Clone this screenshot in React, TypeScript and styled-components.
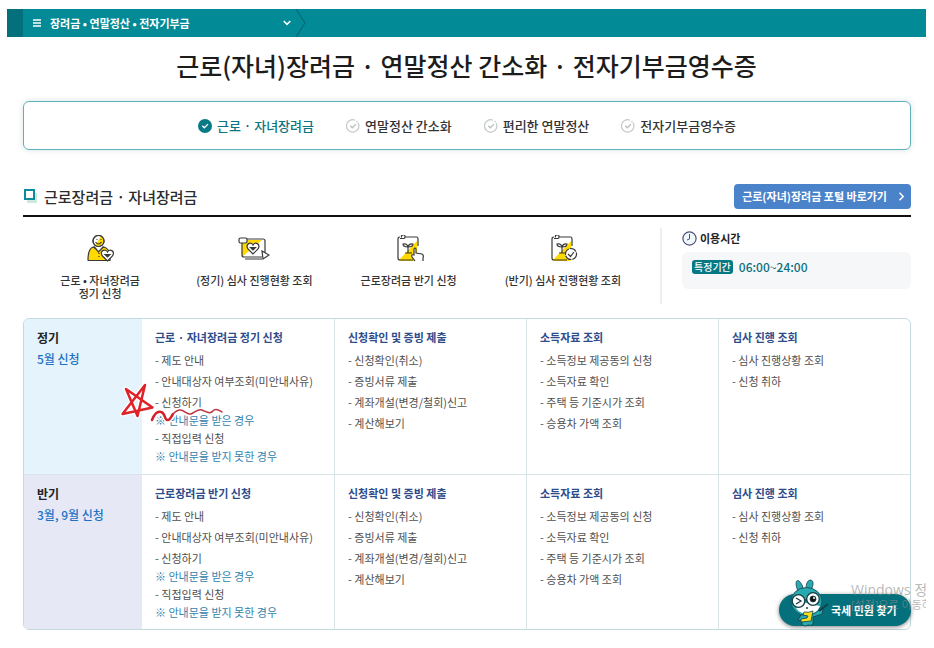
import React from "react";
import styled, { createGlobalStyle, css } from "styled-components";

const GlobalStyle = createGlobalStyle`
  *, *::before, *::after { box-sizing: border-box; }
  body {
    margin: 0;
    background: #fff;
    color: #222;
    font-family: "Noto Sans CJK KR", sans-serif;
    font-size: 11px;
  }
  h1, h2, h3, ul, p { margin: 0; padding: 0; }
  ul { list-style: none; }
  a { color: inherit; text-decoration: none; }
  button { font-family: inherit; border: 0; padding: 0; background: none; cursor: pointer; }
`;

const Page = styled.div`
  position: relative;
  margin: 9px 8px 0 7px;
`;

const TopBar = styled.nav`
  display: flex;
  height: 28px;
  background: #028a96;
  border-left: 16px solid #04707b;
`;

const MenuButton = styled.button`
  display: flex;
  align-items: center;
  gap: 9px;
  width: 272px;
  padding: 0 4px 0 10px;
  color: #fff;
  font-size: 11px;
  font-weight: 700;
  text-align: left;

  span { flex: 1; white-space: nowrap; }
`;

const Title = styled.h1`
  padding-top: 9px;
  font-size: 25px;
  line-height: 38px;
  font-weight: 500;
  text-align: center;
  color: #1c1c1c;
`;

const Content = styled.main`
  padding: 0 15px 0 16px;
`;

const Tabs = styled.nav`
  display: flex;
  justify-content: center;
  align-items: center;
  gap: 32px;
  height: 49px;
  margin-top: 17px;
  border: 1px solid #5fb1bb;
  border-radius: 6px;
  box-shadow: 0 0 6px rgba(0, 80, 90, 0.16);
`;

const Tab = styled.button<{ $active?: boolean }>`
  display: flex;
  align-items: center;
  gap: 5px;
  font-size: 13px;
  font-weight: 500;
  white-space: nowrap;
  color: ${(p) => (p.$active ? "#0b7583" : "#333")};
`;

const SectionHead = styled.header`
  display: flex;
  align-items: center;
  justify-content: space-between;
  height: 67px;
  padding-top: 27px;
  border-bottom: 2px solid #111;

  h2 {
    display: flex;
    align-items: center;
    gap: 6px;
    font-size: 15px;
    font-weight: 500;
    color: #2b2b2b;
  }
`;

const PortalLink = styled.a`
  display: flex;
  align-items: center;
  gap: 11px;
  height: 25px;
  padding: 0 6px 0 8px;
  border-radius: 4px;
  background: #4b83cb;
  color: #fff;
  font-size: 11px;
  font-weight: 700;
`;

const Services = styled.div`
  display: flex;
  padding-top: 11px;
`;

const ServiceList = styled.ul`
  flex: 1;
  display: grid;
  grid-template-columns: repeat(4, 1fr);
  height: 76px;
  padding: 7px 20px 0 0;
  border-right: 2px solid #eee;
`;

const ServiceLink = styled.a`
  display: flex;
  flex-direction: column;
  align-items: center;
  gap: 9px;
  font-size: 11px;
  line-height: 13px;
  font-weight: 500;
  text-align: center;
  color: #333;
  white-space: pre-line;
`;

const Hours = styled.section`
  width: 249px;
  padding-left: 20px;

  h3 {
    display: flex;
    align-items: center;
    gap: 3px;
    height: 20px;
    font-size: 11px;
    font-weight: 700;
  }
`;

const HoursBox = styled.div`
  display: flex;
  gap: 6px;
  height: 37px;
  margin-top: 4px;
  padding: 8px 10px;
  border-radius: 6px;
  background: #f5f7f9;
  color: #0b6f7d;
  font-size: 12px;
  line-height: 14px;
  font-weight: 500;
`;

const Badge = styled.span`
  height: 14px;
  padding: 0 2px;
  border-radius: 3px;
  background: #077985;
  color: #fff;
  font-size: 10px;
  line-height: 14px;
  font-weight: 500;
`;

const TableFrame = styled.div`
  margin-top: 14px;
  border: 1px solid #c3dadf;
  border-radius: 6px;
`;

const Table = styled.table`
  width: 100%;
  table-layout: fixed;
  border-collapse: separate;
  border-spacing: 0;

  th, td { height: 155px; padding: 8px 0 0 13px; vertical-align: top; text-align: left; }
  td { border-left: 1px solid #d9e5e8; }
  td:nth-child(2) { border-left: 0; }
  tr + tr > * { border-top: 1px solid #d9e5e8; }
  tr:first-child > th { border-top-left-radius: 5px; }
  tr:last-child > th { border-bottom-left-radius: 5px; }
`;

const Period = styled.th<{ $tint: string }>`
  width: 118px;
  background: ${(p) => p.$tint};
  font-size: 12px;
  line-height: 21px;
  font-weight: 700;

  span { display: block; font-weight: 500; color: #1c72c4; }
`;

const GroupTitle = styled.h3`
  font-size: 11px;
  line-height: 20px;
  font-weight: 700;
  color: #2d4c8c;
`;

const Links = styled.ul`
  display: grid;
  gap: 3px;
  padding-top: 4px;
  line-height: 18px;
  color: #505050;
  white-space: nowrap;

  li { position: relative; }
  a { display: block; width: max-content; }
`;

const NoteLink = styled.a`
  color: #3382ad;
`;

const Scribble = styled.svg`
  position: absolute;
  left: -36px;
  top: -11px;
  pointer-events: none;
`;

const overlay = css`
  position: absolute;
  right: 0;
`;

const FindButton = styled.button`
  ${overlay}
  right: 15px;
  bottom: 4px;
  width: 132px;
  height: 32px;
  padding-left: 52px;
  border-radius: 16px;
  background: #04707c;
  box-shadow: 0 1px 4px rgba(0, 0, 0, 0.5);
  color: #fff;
  font-size: 11px;
  font-weight: 700;
  text-align: left;
  white-space: nowrap;

  svg { position: absolute; left: 10px; bottom: -1px; }
`;

const Watermark = styled.p`
  ${overlay}
  bottom: 18px;
  width: 75px;
  overflow: hidden;
  white-space: nowrap;
  color: rgba(140, 140, 140, 0.62);
  font-family: "Open Sans", "Noto Sans CJK KR", sans-serif;
  font-size: 11px;
  line-height: 14px;
  pointer-events: none;

  strong { display: block; font-size: 14px; line-height: 17px; font-weight: 400; }
`;

const MenuIcon = () => (
  <svg width="8" height="8" viewBox="0 0 8 8" stroke="#fff" strokeWidth="1.4" aria-hidden="true">
    <path d="M0 1h8M0 4h8M0 7h8" />
  </svg>
);

const DownIcon = () => (
  <svg width="8" height="6" viewBox="0 0 8 6" fill="none" stroke="#fff" strokeWidth="1.6" aria-hidden="true">
    <path d="M.7 1 4 4.3 7.3 1" />
  </svg>
);

const BarArrow = () => (
  <svg width="11" height="28" viewBox="0 0 11 28" fill="none" stroke="#04606c" aria-hidden="true">
    <path d="M1 0 10 14 1 28" />
  </svg>
);

const RightIcon = () => (
  <svg width="7" height="9" viewBox="0 0 7 9" fill="none" stroke="#fff" strokeWidth="1.5" aria-hidden="true">
    <path d="M1.5.8 5.2 4.5 1.5 8.2" />
  </svg>
);

const CheckIcon = ({ active }: { active?: boolean }) => (
  <svg width="14" height="14" viewBox="0 0 14 14" fill="none" aria-hidden="true">
    {active ? (
      <circle cx="7" cy="7" r="7" fill="#087986" />
    ) : (
      <path d="M12 3.8A6.2 6.2 0 1 1 9 1.2M10.5 2l1 1" stroke="#c4c8c7" strokeWidth="1.2" />
    )}
    <path d="m4.3 6.8 2 2 3.7-3.7" stroke={active ? "#fff" : "#b9bdbc"} strokeWidth="1.3" />
  </svg>
);

const SquareIcon = () => (
  <svg width="15" height="15" viewBox="0 0 15 15" aria-hidden="true">
    <path d="M4 4h10v10H4z" fill="#cfe8df" />
    <path d="M2 1h9v9H2z" fill="#fff" stroke="#078d9b" strokeWidth="2" />
  </svg>
);

const ClockIcon = () => (
  <svg width="15" height="15" viewBox="0 0 15 15" fill="none" stroke="#524e78" aria-hidden="true">
    <circle cx="7.5" cy="7.5" r="6.6" fill="#eff8fb" strokeWidth="1.2" />
    <path d="M7.5 3v5L5 9" />
  </svg>
);

const ink = "#393939";
const yellow = "#ffd900";

const PersonIcon = () => (
  <svg width="28" height="30" viewBox="-1 1 28 30" fill="none" stroke={ink} strokeWidth="1.2" aria-hidden="true">
    <path d="M1 26q0-11 5-13l5 3 6-3q5 2 6 7v6.500H2q-1 0-1-.5z" fill={yellow} />
    <path d="m7 12.500 4.500 5.500 5-5.500" fill="#fff" />
    <circle cx="11.500" cy="7" r="5.500" fill="#fff" />
    <path d="M14 2.100a5.500 5.500 0 0 1-5.500 9.500z" fill={yellow} stroke="none" />
    <circle cx="11.500" cy="7" r="5.500" />
    <path d="M8.500 8q3 4 6 0M9.500 5.500h1M13.500 5.500h1M12 19v1M12 22v1" />
    <path d="m20.500 27-5-5c-4-5 3-8 5-4 2-4 8-1 5 4z" fill="#fff" />
    <path d="M18 20.500h5L20.500 23z" fill={ink} />
  </svg>
);

const ScreenIcon = () => (
  <svg width="32" height="30" viewBox="0 0 32 30" fill="none" stroke={ink} strokeWidth="1.2" aria-hidden="true">
    <path d="M4 5h20L4 22z" fill={yellow} stroke="none" />
    <path d="M9 4h16q2 0 2 2v12M4 8v12q0 2 2 2h18M7 24h17" />
    <rect x="1" y="3" width="8" height="5" rx="1.500" fill="#fff" />
    <path d="m15 19-5-5c-3-5 3-8 5-4 2-4 8-1 5 4z" fill="#fff" />
    <path d="M12.500 12.500h5L15 15z" fill={ink} />
    <path d="m24 16 7 4-6 4z" fill="#fff" />
  </svg>
);

const DocumentIcon = ({ mark }: { mark: "hand" | "check" }) => (
  <svg width="30" height="30" viewBox="-3 1 30 30" fill="none" stroke={ink} strokeWidth="1.2" aria-hidden="true">
    <path d="M2 26 20 7v19q0 1-1 1H4q-2 0-2-1z" fill={yellow} stroke="none" />
    <path d="M8 3h12q1 0 1 2v7M3 3q-2 0-2 2v19q0 2 2 2h13" />
    <path d="M3 4.500h4q1 0 1-2T6 1q-2 0-1.500 2.500" />
    <path d="M11 19v-7M8 19h7" />
    <path d="M11 13q-5 0-5-3 4-1 5 3 1-4 5-3 0 3-5 3z" />
    {mark === "hand" ? (
      <path d="m18 27-3-4q-1-3 2-2v-6q1-2 2 0v4l6 1q2 1 1 4v3" fill="#fff" />
    ) : (
      <>
        <circle cx="20" cy="20" r="5.500" fill="#fff" strokeDasharray="7 1" />
        <path d="m17 20 2.500 2.500L23 18" />
      </>
    )}
  </svg>
);

const Mascot = () => (
  <svg width="40" height="48" viewBox="0 0 40 48" stroke="#173f47" strokeWidth=".8" aria-hidden="true">
    <path d="M9 12C5 3 8-1 11 3q3 3 3 7h3q0-8 4-9c5 0 3 7 0 12z" fill="#28aab2" />
    <path d="m12 36-3 5 4 1v4q4 2 6 0 3 1 5-1v-7l9-3 1-5-8 2z" fill="#28aab2" />
    <ellipse cx="17.500" cy="22.500" rx="15.500" ry="14" fill="#28aab2" />
    <path d="M7 29q5-2 8-5h6q7 3 10 3-3 8-12 8-8 0-12-6z" fill="#fff" stroke="none" />
    <g fill="#fff" strokeWidth="1.300">
      <circle cx="9.500" cy="22" r="6.300" />
      <circle cx="24" cy="20" r="6.300" />
      <path d="M16 21h2" />
    </g>
    <circle cx="24" cy="20" r="3" fill="#111" />
    <circle cx="25" cy="19" r="1" fill="#fff" stroke="none" />
    <path d="m7 19 5 3-5 3" fill="none" strokeWidth="1.300" />
    <path d="M15 33q4 1 9-1l-2 10-10 1v-3l6-1 1-2-5-1z" fill="#f8de20" />
    <path d="m30 32 9-7" strokeWidth="1.800" />
    <path d="M17 29h2" strokeWidth="1.300" />
  </svg>
);

const Marks = () => (
  <Scribble width="108" height="44" viewBox="0 0 108 44" fill="none" strokeLinecap="round" strokeLinejoin="round" aria-hidden="true">
    <path d="M26 3 3.500 32 33.500 25.500 7 7l11.500 27zM33 38c2-5 5-9 9-8 5 1 3 9 7 8s6-10 12-10c5 0 6 5 11 4 5-2 6-5 11-4 5 2 8 5 12 0 3-2 6 1 8 2" stroke="#fff" strokeWidth="5" />
    <path d="M26 3 3.500 32 33.500 25.500 7 7l11.500 27z" stroke="#df2128" strokeWidth="2.500" />
    <path d="M33 38c2-5 5-9 9-8 5 1 3 9 7 8 2 0 3-3 5-6" stroke="#d61f28" strokeWidth="2.500" />
    <path d="M54 32q4-4 7-4c5 0 6 5 11 4 5-2 6-5 11-4 5 2 8 5 12 0 3-2 6 1 8 2" stroke="#bd3540" strokeWidth="1.500" />
  </Scribble>
);

const tabs = ["근로 · 자녀장려금", "연말정산 간소화", "편리한 연말정산", "전자기부금영수증"];

const services = [
  { label: "근로 • 자녀장려금\n정기 신청", icon: <PersonIcon /> },
  { label: "(정기) 심사 진행현황 조회", icon: <ScreenIcon /> },
  { label: "근로장려금 반기 신청", icon: <DocumentIcon mark="hand" /> },
  { label: "(반기) 심사 진행현황 조회", icon: <DocumentIcon mark="check" /> },
];

const groups = [
  { title: "신청확인 및 증빙 제출", links: ["신청확인(취소)", "증빙서류 제출", "계좌개설(변경/철회)신고", "계산해보기"] },
  { title: "소득자료 조회", links: ["소득정보 제공동의 신청", "소득자료 확인", "주택 등 기준시가 조회", "승용차 가액 조회"] },
  { title: "심사 진행 조회", links: ["심사 진행상황 조회", "신청 취하"] },
];

const periods = [
  { name: "정기", months: "5월 신청", title: "근로 · 자녀장려금 정기 신청", tint: "#e4f3fc", marked: true },
  { name: "반기", months: "3월, 9월 신청", title: "근로장려금 반기 신청", tint: "#e7e8f6", marked: false },
];

export default function App() {
  return (
    <>
      <GlobalStyle />
      <Page>
        <TopBar>
          <MenuButton>
            <MenuIcon />
            <span>장려금 • 연말정산 • 전자기부금</span>
            <DownIcon />
          </MenuButton>
          <BarArrow />
        </TopBar>
        <Title>근로(자녀)장려금 · 연말정산 간소화 · 전자기부금영수증</Title>
        <Content>
          <Tabs>
            {tabs.map((label, i) => (
              <Tab key={label} $active={i === 0}>
                <CheckIcon active={i === 0} />
                {label}
              </Tab>
            ))}
          </Tabs>
          <SectionHead>
            <h2>
              <SquareIcon />
              근로장려금 · 자녀장려금
            </h2>
            <PortalLink href="#portal">
              근로(자녀)장려금 포털 바로가기
              <RightIcon />
            </PortalLink>
          </SectionHead>
          <Services>
            <ServiceList>
              {services.map((s) => (
                <li key={s.label}>
                  <ServiceLink href="#service">
                    {s.icon}
                    {s.label}
                  </ServiceLink>
                </li>
              ))}
            </ServiceList>
            <Hours>
              <h3>
                <ClockIcon />
                이용시간
              </h3>
              <HoursBox>
                <Badge>특정기간</Badge>
                06:00~24:00
              </HoursBox>
            </Hours>
          </Services>
          <TableFrame>
            <Table>
              <tbody>
                {periods.map((p) => (
                  <tr key={p.name}>
                    <Period scope="row" $tint={p.tint}>
                      {p.name}
                      <span>{p.months}</span>
                    </Period>
                    <td>
                      <GroupTitle>{p.title}</GroupTitle>
                      <Links>
                        <li><a href="#guide">- 제도 안내</a></li>
                        <li><a href="#target">- 안내대상자 여부조회(미안내사유)</a></li>
                        <li>
                          <a href="#apply">- 신청하기</a>
                          <NoteLink href="#notice">※ 안내문을 받은 경우</NoteLink>
                          <a href="#direct">- 직접입력 신청</a>
                          <NoteLink href="#no-notice">※ 안내문을 받지 못한 경우</NoteLink>
                          {p.marked && <Marks />}
                        </li>
                      </Links>
                    </td>
                    {groups.map((g) => (
                      <td key={g.title}>
                        <GroupTitle>{g.title}</GroupTitle>
                        <Links>
                          {g.links.map((l) => (
                            <li key={l}><a href="#item">- {l}</a></li>
                          ))}
                        </Links>
                      </td>
                    ))}
                  </tr>
                ))}
              </tbody>
            </Table>
          </TableFrame>
        </Content>
        <FindButton>
          <Mascot />
          국세 민원 찾기
        </FindButton>
        <Watermark>
          <strong>Windows 정</strong>
          [설정]으로 이동하
        </Watermark>
      </Page>
    </>
  );
}
